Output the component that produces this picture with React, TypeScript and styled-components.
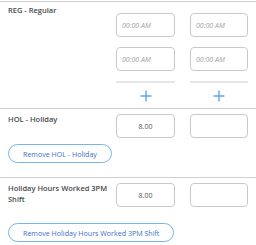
import React from 'react';
import styled, { createGlobalStyle } from 'styled-components';

const GlobalStyle = createGlobalStyle`
    body {
        margin: 0;
        background: #fff;
        font-family: 'Open Sans', 'Noto Sans', sans-serif;
    }
`;

const Wrapper = styled.div`
    width: 256px;
    padding-top: 1px;
`;

/* 코드 섹션 */
const Section = styled.section`
    border-top: 1px solid #cfcfcf;
    padding: ${props => props.pad};
`;

const Row = styled.div`
    display: grid;
    grid-template-columns: 1fr 59px 58px;
    column-gap: 15px;
    align-items: start;
`;

const Label = styled.div`
    font-size: 7.5px;
    line-height: 11px;
    font-weight: 600;
    color: #4a4a4a;
    padding-top: ${props => props.top || 0}px;
    margin-right: -9px;
`;

const Col = styled.div`
    display: flex;
    flex-direction: column;
    padding-top: ${props => props.top || 0}px;
`;

const TimeInput = styled.div`
    box-sizing: border-box;
    height: 24px;
    border: 1px solid #c9c9c9;
    border-radius: 4px;
    display: flex;
    align-items: center;
    justify-content: ${props => (props.center ? 'center' : 'flex-start')};
    padding-left: ${props => (props.center ? 0 : 5)}px;
    font-size: 7px;
    color: #555;
    margin-bottom: ${props => props.mb || 0}px;
`;

const Placeholder = styled.span`
    font-style: italic;
    color: #a0a0a0;
`;

const Divider = styled.div`
    height: 2px;
    background: #e6e6e6;
    margin-top: 10px;
`;

const AddBtn = styled.div`
    display: flex;
    justify-content: center;
    padding-top: 7px;
`;

const RemoveBtn = styled.button`
    display: block;
    box-sizing: border-box;
    height: 19px;
    margin-top: ${props => props.gap}px;
    padding: 0 14px;
    background: #fff;
    border: 1px solid #77b4f2;
    border-radius: 10px;
    font-family: 'Open Sans', sans-serif;
    font-size: 7.1px;
    font-weight: 500;
    color: #3c6fc8;
    white-space: nowrap;
`;

const Plus = () => (
    <svg width="12" height="12" viewBox="0 0 12 12">
        <path d="M6 0.5V11.5M0.5 6H11.5" stroke="#5ea8ef" strokeWidth="1.4" />
    </svg>
);

const App = () => {
    return (
        <Wrapper>
            <GlobalStyle />
            <Section pad="0 8px 6px">
                <Row>
                    <Label top={3}>REG - Regular</Label>
                    {[0, 1].map(i => (
                        <Col key={i} top={11}>
                            <TimeInput mb={10}>
                                <Placeholder>00:00 AM</Placeholder>
                            </TimeInput>
                            <TimeInput>
                                <Placeholder>00:00 AM</Placeholder>
                            </TimeInput>
                            <Divider />
                            <AddBtn>
                                <Plus />
                            </AddBtn>
                        </Col>
                    ))}
                </Row>
            </Section>
            <Section pad="5px 8px 14px">
                <Row>
                    <Label top={0}>HOL - Holiday</Label>
                    <TimeInput center>8.00</TimeInput>
                    <TimeInput center />
                </Row>
                <RemoveBtn gap={6}>Remove HOL - Holiday</RemoveBtn>
            </Section>
            <Section pad="5px 8px 4px">
                <Row>
                    <Label top={0}>Holiday Hours Worked 3PM Shift</Label>
                    <TimeInput center>8.00</TimeInput>
                    <TimeInput center />
                </Row>
                <RemoveBtn gap={16}>Remove Holiday Hours Worked 3PM Shift</RemoveBtn>
            </Section>
        </Wrapper>
    );
};

export default App;
